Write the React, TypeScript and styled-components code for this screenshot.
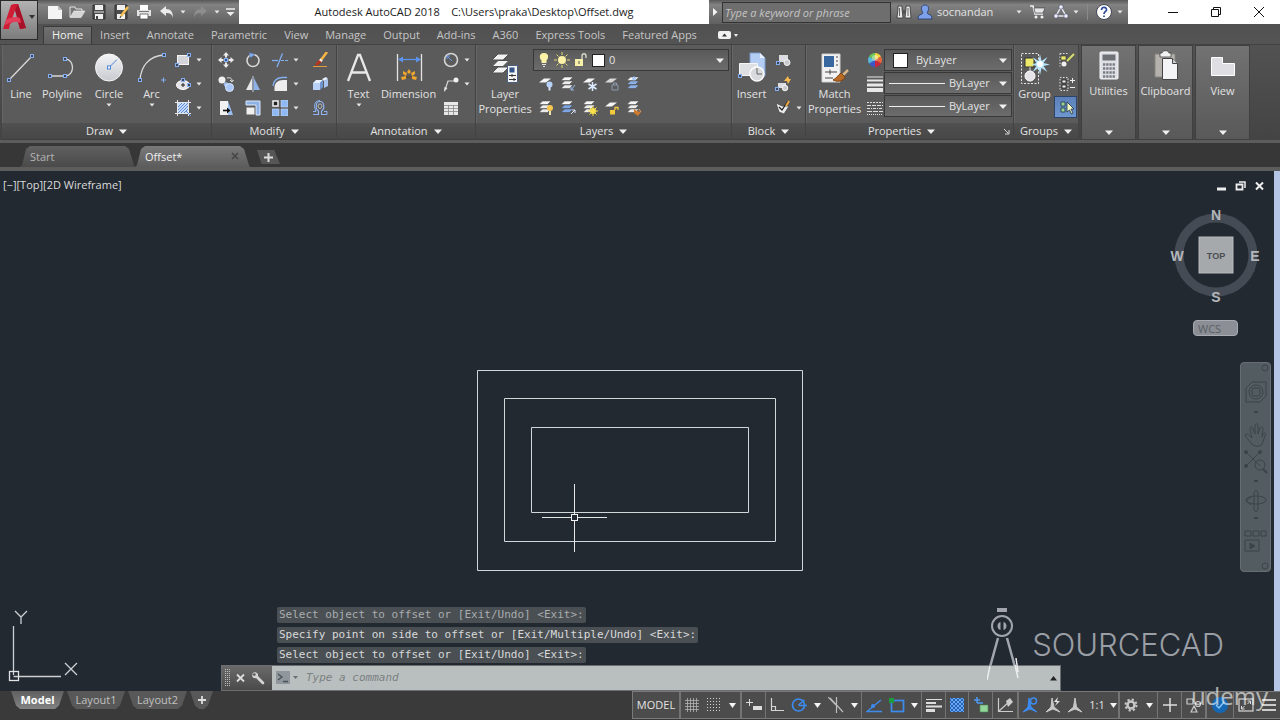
import React from 'react';
import styled, { createGlobalStyle, css } from 'styled-components';

const ui = '"Open Sans", "Noto Sans", sans-serif';
const mono = '"DejaVu Sans Mono", "Liberation Mono", monospace';

const Global = createGlobalStyle`
  * { box-sizing: border-box; }
  body { margin: 0; background: #383838; color: #e2e2e2; font: 11px/16px ${ui}; }
  button, input, select { font: inherit; color: inherit; }
  button { border: 0; padding: 0; background: none; cursor: pointer; }
  svg { display: block; flex: none; }
`;

const Page = styled.div`
  min-height: 100vh;
  display: flex;
  flex-direction: column;
`;

/* ---------- icons ---------- */

type IconProps = { w?: number; h?: number; box?: string; children?: React.ReactNode };
const Icon = ({ w = 16, h = 16, box, children }: IconProps) => (
  <svg width={w} height={h} viewBox={box || `0 0 ${w} ${h}`} fill="none" aria-hidden="true">
    {children}
  </svg>
);

const Caret = ({ big }: { big?: boolean }) =>
  big ? (
    <Icon w={8} h={5}><path d="M0 0.5h8L4 5z" fill="#f0f0f0" /></Icon>
  ) : (
    <Icon w={6} h={4}><path d="M0.5 0.5h5L3 3.5z" fill="#e8e8e8" /></Icon>
  );

const Grip = ({ x, y }: { x: number; y: number }) => (
  <rect x={x - 1.5} y={y - 1.5} width="3" height="3" fill="#3d4654" stroke="#85aef2" />
);

const LineIcon = () => (
  <Icon w={30} h={32}><path d="M3 28L26 4" stroke="#d8d8d8" strokeWidth="1.3" /><Grip x={3} y={28} /><Grip x={26} y={4} /></Icon>
);
const PolylineIcon = () => (
  <Icon w={30} h={32}><path d="M3 24h15c10 0 10-17 0-17" stroke="#d8d8d8" strokeWidth="1.3" /><Grip x={3} y={24} /><Grip x={18} y={24} /><Grip x={18} y={7} /></Icon>
);
const CircleIcon = () => (
  <Icon w={30} h={32}>
    <defs><linearGradient id="disc" x1="0" y1="0" x2="0" y2="1"><stop stopColor="#f4f4f6" /><stop offset="1" stopColor="#c8cad0" /></linearGradient></defs>
    <circle cx="15" cy="15.500" r="13.500" fill="url(#disc)" stroke="#f6f6f6" /><path d="M15 15.500l8-8" stroke="#4b83d8" /><rect x="13.500" y="14" width="3" height="3" fill="#fff" stroke="#4b83d8" />
  </Icon>
);
const ArcIcon = () => (
  <Icon w={30} h={32}><path d="M3 28C4 14 12 4 27 3" stroke="#d8d8d8" strokeWidth="1.3" /><Grip x={3} y={28} /><Grip x={27} y={3} /><path d="M24 28h5M26.500 25.500v5" stroke="#85aef2" /></Icon>
);
const RectIcon = () => (
  <Icon><rect x="2.500" y="3.500" width="11" height="9" fill="#d4d4d8" stroke="#f4f4f4" /><Grip x={2} y={13} /><Grip x={14} y={3} /></Icon>
);
const EllipseIcon = () => (
  <Icon><ellipse cx="8" cy="9" rx="6.500" ry="4.500" fill="#e4e4e8" stroke="#fff" /><path d="M6 9h4M8 7v4" stroke="#222" /><Grip x={8} y={4} /><Grip x={14} y={9} /></Icon>
);
const HatchIcon = () => (
  <Icon><rect x="3" y="3" width="10" height="10" fill="#c9dcfa" /><path d="M3 7l4-4M3 10l7-7M3 13L13 3M6 13l7-7M9 13l4-4" stroke="#3f76c9" strokeWidth=".8" /><path d="M0 2.500h16M0 13.500h16M2.500 0v16M13.500 0v16" stroke="#e6e6e6" /><path d="M11 11l5 5" stroke="#5b93ec" /></Icon>
);
const MoveIcon = () => (
  <Icon><path d="M8 0l3 3.500H9v2H7v-2H5zM8 16l3-3.500H9v-2H7v2H5zM0 8l3.500-3v2h2v2h-2v2zM16 8l-3.500-3v2h-2v2h2v2z" fill="#ececec" /><rect x="6.500" y="6.500" width="3" height="3" stroke="#85aef2" fill="#35598c" /></Icon>
);
const RotateIcon = () => (
  <Icon><circle cx="8" cy="8.500" r="6" stroke="#d8d8d8" strokeWidth="1.600" /><path d="M4 0.500l5.500 2L5.500 6z" fill="#85aef2" stroke="#4a6fae" strokeWidth=".5" /></Icon>
);
const TrimIcon = () => (
  <Icon><path d="M0 8.500h6" stroke="#85aef2" strokeWidth="1.300" /><path d="M9 8.500h7" stroke="#85aef2" strokeDasharray="3 1" /><path d="M10.500 1.500L5 15" stroke="#85aef2" strokeWidth="1.300" /></Icon>
);
const EraseIcon = () => (
  <Icon><path d="M15 0L9 8" stroke="#f3b646" strokeWidth="2.600" /><path d="M9.500 7.500l-2 2.500" stroke="#f4f4f4" strokeWidth="3" /><path d="M7 8l2.500 2c-2 3-5 4-7 3 2-1 2.500-4 4.500-5z" fill="#b3361a" /><path d="M1 14.500h14" stroke="#e89a38" /></Icon>
);
const CopyIcon = () => (
  <Icon><circle cx="4" cy="4" r="3.500" fill="#f0f0f0" /><path d="M9 2c4-1 5 1 5 3M12 4l2 2 1.500-2" stroke="#e4e4e4" /><circle cx="8" cy="8.500" r="2.200" fill="#9fc0f4" /><circle cx="11.500" cy="11.500" r="4" fill="#a9c7f6" stroke="#dbe8ff" /></Icon>
);
const MirrorIcon = () => (
  <Icon><path d="M7 2v12H1z" fill="#e8e8e8" /><path d="M9 2v12h6z" fill="#8fb2e6" /><path d="M8 0v16" stroke="#c0d4f4" /></Icon>
);
const FilletIcon = () => (
  <Icon><path d="M2.500 15V11.500C2.500 7 6 4 11 4h4v11z" fill="#ededf0" /><path d="M1 10C1.500 5 4.500 2 10 1.500h5" stroke="#85aef2" strokeWidth="1.400" /></Icon>
);
const ExplodeIcon = () => (
  <Icon><path d="M1 7h7v7H1z" fill="#b9d1f6" /><path d="M1 7l3-3h7L8 7z" fill="#e8f0ff" /><path d="M8 7l3-3v7l-3 3z" fill="#6f95d0" /><path d="M10 3l4-2 2 2-4 2z" fill="#e8f0ff" /><path d="M12 5l4-2v7l-4 2z" fill="#a9c4ee" /></Icon>
);
const StretchIcon = () => (
  <Icon><path d="M2 1h8v14H2z" fill="#f2f2f2" /><path d="M10 1l5 14h-5z" fill="#9cbff2" /><path d="M5 10.500h6" stroke="#111" strokeWidth="1.600" /><path d="M9 7.500l3.500 3L9 13.500z" fill="#111" /></Icon>
);
const ScaleIcon = () => (
  <Icon><path d="M1 1h14v14h-4V5H1z" fill="#8fb2e6" stroke="#dce8fb" /><rect x="1.500" y="7.500" width="8" height="7" fill="#f0f0f0" /></Icon>
);
const ArrayIcon = () => (
  <Icon><rect x="1" y="1" width="5" height="5" fill="#222" stroke="#f4f4f4" strokeWidth="1.500" /><path d="M9 0h7v7H9zM0 9h7v7H0zM9 9h7v7H9z" fill="#8fb8f4" stroke="#c9defc" strokeWidth=".6" /></Icon>
);
const OffsetIcon = () => (
  <Icon>
    <path d="M1 14.500h5.500v-3.500C3 9 3.500 1.500 8 1.500S13 9 9.500 11v3.500H15" stroke="#8fb2f0" strokeWidth="1.200" />
    <path d="M1 11.500h3C0.500 4 4 0.500 8 0.500M12 11.500h3v3" stroke="#8fb2f0" />
    <path d="M8 4c-2.500 0-2.500 4 0 4.500 2.500-.5 2.500-4.500 0-4.500" stroke="#e4e4e4" strokeWidth=".8" />
  </Icon>
);
const TextIcon = () => (
  <Icon w={30} h={32}><path d="M4 29L14 3h2l10 26M8 20.500h14" stroke="#e8e8e8" strokeWidth="2.300" /></Icon>
);
const DimensionIcon = () => (
  <Icon w={30} h={32}>
    <path d="M3.500 2v27M27.500 2v27" stroke="#e4e4e4" strokeWidth="1.300" /><path d="M5 7.500h21" stroke="#5b93ec" strokeWidth="1.300" /><path d="M4 7.500l5-3v6zM27 7.500l-5-3v6z" fill="#5b93ec" />
    <path d="M15 17l2 3-2 2-2-2zM9 19l4 2-1 3-3-2zM21 19l-4 2 1 3 3-2zM7 25l5-1v3l-4 1zM23 25l-5-1v3l4 1z" fill="#f0a52c" /><path d="M12 25h6" stroke="#6d4510" />
  </Icon>
);
const CenterMarkIcon = () => (
  <Icon><circle cx="8" cy="8" r="6.500" stroke="#d4d4d4" strokeWidth="1.600" /><path d="M4 4l5 5M4 4v3M4 4h3" stroke="#6b98e4" /></Icon>
);
const LeaderIcon = () => (
  <Icon><path d="M2 14l3-9h6" stroke="#d8d8d8" strokeWidth="1.200" /><path d="M1 16l.5-5 3 1z" fill="#e4e4e4" /><circle cx="13" cy="4" r="2.500" fill="#f0f0f0" /></Icon>
);
const TableIcon = () => (
  <Icon><path d="M1 2h14v13H1z" fill="#e8e8e8" /><path d="M1 5.500h14M1 8.500h14M1 11.500h14M5.500 5v10M10.500 5v10" stroke="#888" strokeWidth=".8" /></Icon>
);

const Sheets = ({ c = '#ececec' }: { c?: string }) => (
  <>
    <path d="M1 12.500l3.500-3.500H13l-3.500 3.500z" fill={c} stroke="#444" strokeWidth=".5" />
    <path d="M1 8.500l3.500-3.500H13L9.500 8.500z" fill={c} stroke="#444" strokeWidth=".5" />
    <path d="M1 4.500l3.500-3.500H13l-3.500 3.500z" fill="#f6f6f6" stroke="#444" strokeWidth=".5" />
  </>
);
const LayerPropsIcon = () => (
  <Icon w={30} h={32}>
    <path d="M2 21l6-6h11l-6 6zM2 14.500l6-6h11l-6 6zM2 8l6-6h11l-6 6z" fill="#f2f2f2" stroke="#505050" />
    <path d="M17.500 13.500h10v17h-10z" fill="#f4f4f4" stroke="#4d5f80" /><rect x="19.500" y="15.500" width="5" height="5" fill="#33558c" /><path d="M19 23.500h7M19 27.500h7M22 22v3M24 26v3" stroke="#333" />
  </Icon>
);
const MatchIcon = () => (
  <Icon w={30} h={32}>
    <path d="M2 2h18v28H2z" fill="#f2f2f2" stroke="#d0d0d0" /><rect x="4" y="4" width="10" height="11" fill="#38669f" /><path d="M16 5h2M16 9h2M16 13h2M5 20h12M5 26h8M10 17.500v5" stroke="#444" />
    <path d="M28 18l-6 6" stroke="#d9b58a" strokeWidth="2.500" /><path d="M21 21l4 4c-2 5-8 5-12 3 4-2 5-5 8-7z" fill="#b96a24" stroke="#7c4210" />
  </Icon>
);
const InsertIcon = () => (
  <Icon w={30} h={32}>
    <path d="M13 1h10l5 5v18H13z" fill="#b4cdf5" stroke="#7c9bcc" /><path d="M23 1v5h5z" fill="#e8f0ff" /><path d="M2.500 11.500h18v12h-18z" fill="#dedfe3" stroke="#f6f6f6" /><Grip x={3} y={24} />
    <circle cx="20" cy="22" r="7" fill="#d8dade" stroke="#fff" strokeWidth="1.300" /><path d="M20 22v-6M20 22h5" stroke="#666" />
  </Icon>
);

const layerMarks: React.ReactNode[] = [
  <><path d="M1 6.500l5-4h7l-5 4z" fill="#f4f4f4" /><circle cx="11.500" cy="8.500" r="3" fill="#b8d3fb" /><path d="M11.500 11v3.500" stroke="#d8e4fa" strokeWidth="2" /></>,
  <><Sheets /><path d="M15 9l-4 5M11 11v3h3" stroke="#9bb9e8" /></>,
  <><path d="M1 6.500l5-4h7l-5 4z" fill="#f4f4f4" /><path d="M10.500 6v9M6.500 8l8 5M14.500 8l-8 5" stroke="#dceaff" strokeWidth="1.500" /></>,
  <><path d="M1 6.500l5-4h7l-5 4z" fill="#d8d8d8" /><path d="M8 9h6v5H8zM9.500 9V7h3v2" stroke="#8c9aae" /></>,
  <><Sheets c="#8db2ea" /><circle cx="8" cy="2.500" r="2" fill="#a9c7f6" /></>,
  <><Sheets /><circle cx="12" cy="8" r="3" fill="#f6c64f" /><path d="M12 11v4" stroke="#f2e4b0" strokeWidth="2" /></>,
  <><Sheets c="#7ea6e6" /><path d="M11 14l4-4M12 10h3v3" stroke="#d8e4fa" /></>,
  <><Sheets /><circle cx="11" cy="11" r="3" fill="#f8e04a" /><path d="M11 6v10M6 11h10M7.500 7.500l7 7M14.500 7.500l-7 7" stroke="#f8e04a" /></>,
  <><path d="M1 6.500l5-4h7l-5 4z" fill="#f4f4f4" /><path d="M6 10h5v4.500H6z" fill="#f2ca3c" /><path d="M11 10V7.500h3V10" stroke="#f2ca3c" strokeWidth="1.300" /></>,
  <><Sheets /><path d="M8 9l3 2 4 1-3 4-4-3z" fill="#cc7a2e" /><path d="M13 9l2 3" stroke="#e2a466" /></>,
];

const BulbIcon = () => (
  <Icon w={12} h={16}><path d="M6 1c5 0 5 5 2.500 7.500V11h-5V8.500C1 6 1 1 6 1z" fill="#fbf2a8" /><path d="M4 12.500h4M5 14.500h2" stroke="#ddd" /></Icon>
);
const SunIcon = () => (
  <Icon><circle cx="8" cy="8" r="4" fill="#fbf2a8" /><path d="M8 0v3M8 13v3M0 8h3M13 8h3M2.500 2.500l2 2M11.500 11.500l2 2M13.500 2.500l-2 2M4.500 11.500l-2 2" stroke="#e9d977" /></Icon>
);
const UnlockIcon = () => (
  <Icon w={14}><path d="M1 7h8v7H1z" fill="#f7f0a8" /><path d="M8 7V4c0-3 4-3 4 0v2" stroke="#d4d4c4" strokeWidth="1.400" /><path d="M5 9v3" stroke="#555" /></Icon>
);

const blockMarks: React.ReactNode[] = [
  <><path d="M4 3h9v7H4z" fill="#dcdde2" /><circle cx="12" cy="10.500" r="3" fill="#c9cbd1" stroke="#f4f4f4" /><Grip x={3} y={11} /></>,
  <><path d="M3 7h8v5H3z" fill="#dcdde2" /><circle cx="10" cy="12" r="2.800" fill="#c9cbd1" stroke="#f4f4f4" /><path d="M13 0l1 3 2 0-3 5-1-3-3 0z" fill="#f6bb4c" /><Grip x={2} y={13} /></>,
  <><path d="M1 3l6 3 7 0-5 8-5-2z" fill="#ececec" stroke="#444" strokeWidth=".7" /><path d="M4 7l3 3 6-9" stroke="#222" strokeWidth="1.300" /><path d="M14 1l-3 5" stroke="#f0a640" strokeWidth="2" /></>,
];
const ColorWheel = () => (
  <Icon>
    <path d="M8 8V1a7 7 0 0 1 6 3.500z" fill="#f4d53b" /><path d="M8 8l6-3.500a7 7 0 0 1 0 7z" fill="#e8663a" /><path d="M8 8l6 3.500A7 7 0 0 1 8 15z" fill="#c8263c" /><path d="M8 8v7a7 7 0 0 1-6-3.500z" fill="#3a59c8" /><path d="M8 8l-6 3.500a7 7 0 0 1 0-7z" fill="#56b8dc" /><path d="M8 8L2 4.500A7 7 0 0 1 8 1z" fill="#6bc458" /><circle cx="8" cy="6" r="3" fill="#fff" opacity=".4" />
  </Icon>
);
const WeightIcon = () => (
  <Icon><path d="M0 1h16" stroke="#e8e8e8" /><path d="M0 4.500h16" stroke="#e8e8e8" strokeWidth="2" /><path d="M0 9h16" stroke="#e8e8e8" strokeWidth="3" /><path d="M0 14h16" stroke="#e8e8e8" strokeWidth="4" /></Icon>
);
const LinetypeIcon = () => (
  <Icon><path d="M0 2.500h16" stroke="#ddd" strokeDasharray="2 1" /><path d="M0 5.500h16" stroke="#ddd" strokeDasharray="4 1" /><path d="M0 8.500h16" stroke="#ddd" strokeDasharray="3 1 1 1" /><path d="M0 11.500h16" stroke="#ddd" strokeDasharray="5 1" /><path d="M0 14.500h16" stroke="#ddd" strokeDasharray="1 1" /></Icon>
);
const GroupIcon = () => (
  <Icon w={30} h={32}>
    <path d="M1.500 1.500h17v30h-17z" stroke="#e8e8e8" strokeDasharray="2 1.500" /><rect x="5" y="6" width="9" height="9" fill="#ece96b" stroke="#333" /><circle cx="10" cy="24" r="5" fill="#e4e4e8" stroke="#fff" /><path d="M10 15v4" stroke="#ddd" />
    <path d="M20 2l1.500 7 6-4-4 6 7 1.500-7 1.500 4 6-6-4-1.500 7-1.500-7-6 4 4-6-5-1.500 5-1.500-4-6 6 4z" fill="#b8e4fa" /><circle cx="20" cy="12" r="3" fill="#fff" />
  </Icon>
);
const groupMarks: React.ReactNode[] = [
  <><path d="M1 1.500h9M1 1.500v13" stroke="#ddd" strokeDasharray="1.500 1.500" /><rect x="2" y="4" width="5" height="4" fill="#ece96b" stroke="#333" strokeWidth=".6" /><circle cx="5" cy="12" r="2.500" fill="#f0f0f0" /><path d="M15 2L8 9" stroke="#d7df6a" strokeWidth="2" /></>,
  <><path d="M1 1.500h8v13H1z" stroke="#ddd" strokeDasharray="1.500 1.500" /><path d="M3 4h4v3H3zM3 9h4v3H3z" fill="#eee" stroke="#222" strokeWidth=".8" /><path d="M11 4.500h5M13.500 2v5M11 11.500h5" stroke="#eee" /></>,
  <><path d="M2 3h4v4H2zM2 9h4v4H2z" fill="#9ad29a" stroke="#234" strokeWidth=".8" /><path d="M8 3v10l2.500-2 2 4 1.500-1-2-4h3z" fill="#f4f7c0" stroke="#234" strokeWidth=".8" /></>,
];
const CalcIcon = () => (
  <Icon w={30} h={32}>
    <rect x="6" y="2" width="18" height="27" rx="1" fill="#dfe0e6" stroke="#f4f4f6" /><rect x="8.500" y="4.500" width="13" height="6" fill="#6e7076" />
    <path d="M9 14.500h12M9 18.500h12M9 22.500h12M9 26.500h12" stroke="#7a7c84" strokeWidth="2.600" strokeDasharray="2.300 .9" />
  </Icon>
);
const ClipboardIcon = () => (
  <Icon w={30} h={32}>
    <path d="M4 4h20v23H4z" fill="#b5b2ae" stroke="#87847f" /><path d="M9 3h2c0-3 7-3 7 0h2v4H9z" fill="#f2f2f2" stroke="#444" strokeWidth=".8" /><path d="M11.500 8.500h10l5 5v16h-15z" fill="#f4f4f6" stroke="#444" /><path d="M21.500 8.500v5h5" fill="#cfd0d6" stroke="#444" />
  </Icon>
);
const ViewIcon = () => (
  <Icon w={30} h={32}><path d="M3.500 7.500h11v6h12v12h-23z" fill="#dfdfe3" stroke="#fff" /></Icon>
);

/* ---------- title bar ---------- */

const Header = styled.header`
  display: flex;
  background: linear-gradient(#4d4d4d, #545454);
`;
const HeaderMain = styled.div`
  flex: 1;
  min-width: 0;
`;
const AppButton = styled.button`
  width: 38px;
  height: 40px;
  border: 1px solid #2a2a2a;
  background: linear-gradient(#b2b2b2, #7c7c7c);
  display: flex;
  align-items: center;
  justify-content: center;
  gap: 3px;
  padding-bottom: 6px;
`;
const TitleBar = styled.div`
  display: flex;
  height: 24px;
  background: #fff;
`;
const barFill = css`
  background: linear-gradient(#585858, #828282 20%, #606060);
`;
const Quick = styled.div`
  ${barFill}
  display: flex;
  align-items: center;
  width: 201px;
  padding-left: 6px;
`;
const ToolButton = styled.button<{ $w?: number }>`
  width: ${(p) => p.$w ?? 22}px;
  align-self: stretch;
  display: flex;
  align-items: center;
  justify-content: center;
`;
const WindowTitle = styled.h1`
  flex: 1;
  margin: 0;
  color: #1c1c1c;
  font-size: 11px;
  font-weight: 400;
  line-height: 24px;
  white-space: pre;
  text-align: center;
`;
const SearchArea = styled.div`
  ${barFill}
  display: flex;
  align-items: center;
  width: 182px;
`;
const SearchInput = styled.input`
  flex: 1;
  min-width: 0;
  height: 21px;
  padding: 0 2px;
  border: 1px solid #333;
  background: #6e6e6e;
  font-style: italic;
  outline: none;
  &::placeholder { color: #c4c4c4; opacity: 1; }
`;
const InfoCenter = styled.div`
  ${barFill}
  display: flex;
  align-items: center;
  width: 237px;
`;
const UserButton = styled.button`
  display: flex;
  align-items: center;
  gap: 4px;
  width: 98px;
`;
const Rule = styled.span`
  width: 1px;
  height: 16px;
  background: #8a8a8a;
`;
const WindowButtons = styled.div`
  display: flex;
  justify-content: space-around;
  width: 152px;
  padding-left: 24px;
`;

/* ---------- ribbon ---------- */

const TabRow = styled.nav`
  display: flex;
  align-items: flex-end;
  height: 20px;
  padding-left: 6px;
`;
const RibbonTab = styled.button<{ $active?: boolean }>`
  height: 17px;
  padding: 0 9px 1px 8px;
  line-height: 14px;
  color: ${(p) => (p.$active ? '#f0f0f0' : '#c6c6c6')};
  ${(p) => p.$active && css`
    background: linear-gradient(#707070, #606060);
    box-shadow: 0 0 0 1px #3a3a3a;
    padding-right: 8px;
    margin-right: 1px;
  `}
`;
const Ribbon = styled.div`
  display: flex;
  height: 99px;
  padding-left: 2px;
  background: linear-gradient(#525252, #444);
  border-top: 1px solid #424242;
  border-bottom: 3px solid #5c5c5c;
`;
const Panel = styled.section<{ $w: number }>`
  width: ${(p) => p.$w}px;
  display: flex;
  flex-direction: column;
  background: #5b5b5b;
  border-right: 1px solid #434343;
  box-shadow: inset 1px 0 #666;
`;
const PanelBody = styled.div`
  flex: 1;
  display: flex;
  padding: 3px 0 0 1px;
`;
const PanelTitle = styled.button`
  height: 17px;
  display: flex;
  align-items: center;
  justify-content: center;
  gap: 6px;
  background: linear-gradient(#505050, #474747);
  border-bottom: 1px solid #3e3e3e;
`;
const TitleText = styled.span<{ $grow?: boolean }>`
  display: flex;
  align-items: center;
  justify-content: center;
  gap: 6px;
  ${(p) => p.$grow && 'flex: 1;'}
`;
const BigButton = styled.button<{ $w: number }>`
  width: ${(p) => p.$w}px;
  display: flex;
  flex-direction: column;
  align-items: center;
  padding-top: 4px;
  line-height: 15px;
  > svg + span { margin-top: 2px; }
  > span + svg { margin-top: 2px; }
`;
const SmallGrid = styled.div<{ $cols: string }>`
  display: grid;
  grid-template-columns: ${(p) => p.$cols};
  grid-auto-rows: 24px;
`;
const SmallButton = styled.button<{ $on?: boolean }>`
  display: flex;
  align-items: center;
  gap: 5px;
  padding-left: 5px;
  ${(p) => p.$on && css`
    background: linear-gradient(#5b7fb8, #7098d0);
    box-shadow: inset 0 0 0 1px #2c4468;
    margin-bottom: 2px;
  `}
`;
const LayerColumn = styled.div`
  flex: 1;
  display: flex;
  flex-direction: column;
  gap: 1px;
  padding: 1px 2px 0 0;
`;
const Picker = styled.label`
  display: flex;
  align-items: center;
  gap: 4px;
  height: 22px;
  padding: 0 4px;
  border: 1px solid #383838;
  background: linear-gradient(#5a5a5a, #6c6c6c);
`;
const Select = styled.select<{ $pad?: number }>`
  appearance: none;
  flex: 1;
  min-width: 0;
  border: 0;
  padding: 0 0 0 ${(p) => p.$pad ?? 0}px;
  background: none;
  color: #e2e2e2;
  outline: none;
  option { color: #222; }
`;
const Swatch = styled.span<{ $size: number }>`
  width: ${(p) => p.$size}px;
  height: ${(p) => p.$size}px;
  background: #fff;
  border: 1px solid #222;
`;
const Stroke = styled.span<{ $w: number }>`
  width: ${(p) => p.$w}px;
  height: 1px;
  background: #eee;
`;
const PickerStack = styled.div`
  flex: 1;
  display: flex;
  flex-direction: column;
  gap: 1px;
  padding: 1px 1px 0 0;
`;
const CollapsedPanel = styled.button`
  width: 55px;
  margin-left: 2px;
  display: flex;
  flex-direction: column;
  align-items: center;
  padding: 4px 0;
  background: linear-gradient(#727272, #595959);
  border: 1px solid #404040;
  > span { flex: 1; margin-top: 1px; }
`;

/* ---------- drawing tabs ---------- */

const FileTabs = styled.nav`
  display: flex;
  align-items: flex-end;
  height: 28px;
  padding-left: 20px;
  background: #373737;
  border-bottom: 4px solid #5c5c5c;
`;
const FileTab = styled.button<{ $active?: boolean }>`
  width: 115px;
  height: 21px;
  display: flex;
  align-items: center;
  justify-content: space-between;
  padding: 0 10px;
  text-align: left;
  color: ${(p) => (p.$active ? '#f0f0f0' : '#b4b4b4')};
  background: ${(p) => (p.$active ? 'linear-gradient(#7a7a7a, #5c5c5c)' : 'linear-gradient(#606060, #4a4a4a)')};
  clip-path: polygon(0 100%, 2px 92%, 6px 14%, 10px 0, calc(100% - 10px) 0, calc(100% - 6px) 14%, calc(100% - 1px) 92%, 100% 100%);
`;
const AddTab = styled.button`
  width: 23px;
  height: 14px;
  margin: 0 0 3px 7px;
  display: flex;
  align-items: center;
  justify-content: center;
  background: #565656;
  clip-path: polygon(0 0, 75% 0, 100% 100%, 20% 100%);
`;

/* ---------- canvas ---------- */

const Workspace = styled.main`
  flex: 1;
  min-height: 520px;
  position: relative;
  overflow: hidden;
  background: #222931;
  border-right: 6px solid #b5c5e6;
`;
const ViewLabel = styled.div`
  padding: 5px 3px;
  line-height: 18px;
  color: #dcdcdc;
`;
const Place = styled.div<{ $l?: number; $t?: number; $r?: number; $b?: number }>`
  position: absolute;
  ${(p) => p.$l !== undefined && `left: ${p.$l}px;`}
  ${(p) => p.$t !== undefined && `top: ${p.$t}px;`}
  ${(p) => p.$r !== undefined && `right: ${p.$r}px;`}
  ${(p) => p.$b !== undefined && `bottom: ${p.$b}px;`}
`;
const ViewControls = styled(Place)`
  display: flex;
  gap: 3px;
`;
const WcsButton = styled.button`
  width: 45px;
  height: 16px;
  padding-left: 4px;
  border: 1px solid #a8acb2;
  border-radius: 4px;
  background: #8b8e94;
  color: #5a5e66;
  text-align: left;
  line-height: 13px;
`;
const NavBar = styled(Place)`
  width: 31px;
  height: 210px;
  border-radius: 4px;
  background: #535c61;
  border: 1px solid #666e73;
`;
const History = styled(Place)`
  display: flex;
  flex-direction: column;
  align-items: flex-start;
  gap: 4px;
`;
const HistoryLine = styled.div<{ $dim?: boolean }>`
  height: 16px;
  padding: 0 2px;
  border-radius: 2px;
  background: #4a4f53;
  color: ${(p) => (p.$dim ? '#a9adb0' : '#d8dadb')};
  font: 11px/16px ${mono};
`;
const CommandBar = styled.div`
  position: absolute;
  left: 221px;
  right: 213px;
  bottom: 0;
  height: 26px;
  display: flex;
  align-items: center;
  padding: 0 3px 0 0;
  border: 1px solid #6b6e70;
  background: #b9bfbf;
`;
const CommandTools = styled.div`
  display: flex;
  align-items: center;
  gap: 6px;
  width: 50px;
  height: 100%;
  padding-left: 3px;
  background: linear-gradient(#6a6a6a, #4a4a4a);
`;
const CommandInput = styled.input`
  flex: 1;
  min-width: 0;
  border: 0;
  padding: 0 4px;
  background: none;
  color: #333;
  font: italic 11px/16px ${mono};
  outline: none;
  &::placeholder { color: #7b8082; opacity: 1; }
`;
const Wordmark = styled.div`
  color: #9a9ea5;
  font: 300 31px/32px Inter, sans-serif;
`;

/* ---------- bottom ---------- */

const Footer = styled.footer`
  position: relative;
  display: flex;
  justify-content: space-between;
  align-items: flex-start;
  height: 29px;
  background: #3a3a3a;
`;
const LayoutTabs = styled.nav`
  display: flex;
  padding-left: 11px;
`;
const LayoutTab = styled.button<{ $active?: boolean; $w: number }>`
  width: ${(p) => p.$w}px;
  height: 18px;
  margin-right: 3px;
  color: ${(p) => (p.$active ? '#fff' : '#c0c0c0')};
  font-weight: ${(p) => (p.$active ? 700 : 400)};
  background: ${(p) => (p.$active ? 'linear-gradient(#606060, #828282)' : '#585858')};
  clip-path: polygon(0 0, 100% 0, calc(100% - 5px) 80%, calc(100% - 9px) 100%, 9px 100%, 5px 80%);
  display: flex;
  align-items: center;
  justify-content: center;
`;
const StatusBar = styled.div`
  display: flex;
  height: 28px;
  border: 1px solid #7a7a7a;
  border-right: 0;
  background: #4c4c4c;
`;
const StatusGroup = styled.div<{ $wide?: boolean }>`
  display: flex;
  border-right: ${(p) => (p.$wide ? 2 : 1)}px solid #747474;
`;
const Watermark = styled.div`
  position: absolute;
  right: 12px;
  bottom: 8px;
  color: #fff;
  opacity: 0.6;
  font: 24px/32px ${ui};
  pointer-events: none;
`;

const tabs = ['Insert', 'Annotate', 'Parametric', 'View', 'Manage', 'Output', 'Add-ins', 'A360', 'Express Tools', 'Featured Apps'];

const Small = ({ icon, name, caret, on }: { icon: React.ReactNode; name: string; caret?: boolean; on?: boolean }) => (
  <SmallButton aria-label={name} $on={on}>{icon}{caret && <Caret />}</SmallButton>
);
const Title = ({ children }: { children: string }) => (
  <PanelTitle>{children}<Caret big /></PanelTitle>
);
const Big = ({ icon, w, lines, caret }: { icon: React.ReactNode; w: number; lines: string[]; caret?: boolean }) => (
  <BigButton $w={w}>{icon}{lines.map((l) => <span key={l}>{l}</span>)}{caret && <Caret />}</BigButton>
);
const Status = ({ name, w = 22, children }: { name: string; w?: number; children: React.ReactNode }) => (
  <ToolButton $w={w} aria-label={name}>{children}</ToolButton>
);
const Drop = ({ w = 15, name }: { w?: number; name: string }) => (
  <ToolButton $w={w} aria-label={name}><Icon w={7} h={5}><path d="M0 0h7L3.500 5z" fill="#f4f4f4" /></Icon></ToolButton>
);

const TitleRow = () => (
  <TitleBar>
    <Quick>
      <ToolButton aria-label="New"><Icon><path d="M1 2h10l4 4v9H1z" fill="#f4f4f4" /><path d="M11 2v4h4z" fill="#bbb" /></Icon></ToolButton>
      <ToolButton aria-label="Open"><Icon><path d="M1 13V3h5l1 2h6v2" stroke="#e4e4e4" fill="#777" /><path d="M1 13.500L5 7h11l-4 6.500z" fill="#d4d4d4" stroke="#f0f0f0" strokeWidth=".6" /></Icon></ToolButton>
      <ToolButton aria-label="Save"><Icon><path d="M2 1h12v14H2z" fill="#4c4c4c" stroke="#333" /><path d="M4 1h8v5H4zM4 10h8v5H4z" fill="#f0f0f0" /><path d="M3 8h10" stroke="#999" strokeWidth="2" /><path d="M6 12v3" stroke="#444" strokeWidth="2" /></Icon></ToolButton>
      <ToolButton aria-label="Save As"><Icon><path d="M2 1h12v14H2z" fill="#4c4c4c" stroke="#333" /><path d="M4 1h8v5H4zM4 10h8v5H4z" fill="#f0f0f0" /><path d="M15 3L8 12" stroke="#f3bf55" strokeWidth="2.600" /><path d="M8 12l-1 2" stroke="#333" /></Icon></ToolButton>
      <ToolButton $w={23} aria-label="Plot"><Icon><path d="M4 1h8v5H4z" fill="#fff" /><path d="M1 6h14v6H1z" fill="#e4e4e4" /><path d="M4 10h8v5H4z" fill="#fff" stroke="#555" strokeWidth=".8" /><path d="M3 7.500h10" stroke="#777" /></Icon></ToolButton>
      <ToolButton $w={24} aria-label="Undo"><Icon><path d="M1 7l6-5v3c5 0 7 3 7 9-1-4-3-5-7-5v3z" fill="#eaeaea" /></Icon></ToolButton>
      <ToolButton $w={8} aria-label="Undo list"><Caret /></ToolButton>
      <ToolButton $w={26} aria-label="Redo"><Icon><path d="M15 7L9 2v3c-5 0-7 3-7 9 1-4 3-5 7-5v3z" fill="#8d8d8d" /></Icon></ToolButton>
      <ToolButton $w={8} aria-label="Redo list"><Caret /></ToolButton>
      <ToolButton $w={18} aria-label="Customize toolbar"><Icon w={9} h={9}><path d="M0 1h9" stroke="#eee" strokeWidth="1.500" /><path d="M.5 4h8l-4 4z" fill="#eee" /></Icon></ToolButton>
    </Quick>
    <WindowTitle>{'Autodesk AutoCAD 2018    C:\\Users\\praka\\Desktop\\Offset.dwg'}</WindowTitle>
    <SearchArea>
      <ToolButton $w={13} aria-label="Collapse search"><Icon w={5} h={8}><path d="M0 0l4.500 4L0 8z" fill="#f4f4f4" /></Icon></ToolButton>
      <SearchInput aria-label="Search" placeholder="Type a keyword or phrase" />
    </SearchArea>
    <InfoCenter>
      <ToolButton $w={26} aria-label="Find"><Icon><path d="M2 2h4v3l1 9H1l1-9zM10 2h4l1 12H9l1-9z" fill="#e8e8e8" stroke="#333" strokeWidth=".8" /><path d="M6 6h4v4H6z" fill="#555" /><path d="M3.500 4v8M12 4v8" stroke="#666" /></Icon></ToolButton>
      <UserButton><Icon><path d="M8 1c4 0 4 4 3 6s-1 2 0 3c3 1 4 2 4 5H1c0-3 1-4 4-5 1-1 1-1 0-3S4 1 8 1z" fill="#7da0ea" stroke="#26386b" strokeWidth=".8" /></Icon>socnandan</UserButton>
      <ToolButton $w={8} aria-label="Account menu"><Caret /></ToolButton>
      <ToolButton $w={28} aria-label="Exchange"><Icon><path d="M1 2h3l2 8h8" stroke="#f0f0f0" strokeWidth="1.500" /><path d="M5 4h11l-2 5H6z" fill="#e4e4e4" stroke="#334" strokeWidth=".6" /><circle cx="7" cy="13" r="1.500" fill="#f0f0f0" /><circle cx="13" cy="13" r="1.500" fill="#f0f0f0" /></Icon></ToolButton>
      <ToolButton $w={20} aria-label="Stay connected"><Icon><path d="M8 3L3 12h10z" stroke="#e4e8f4" strokeWidth="1.500" /><circle cx="8" cy="3" r="2.200" fill="#eef" stroke="#446" strokeWidth=".6" /><circle cx="3" cy="12" r="2.200" fill="#eef" stroke="#446" strokeWidth=".6" /><circle cx="13" cy="12" r="2.200" fill="#eef" stroke="#446" strokeWidth=".6" /></Icon></ToolButton>
      <ToolButton $w={10} aria-label="Connect menu"><Caret /></ToolButton>
      <ToolButton $w={12} as="span"><Rule /></ToolButton>
      <ToolButton $w={22} aria-label="Help"><Icon><circle cx="8" cy="8" r="7.500" fill="#fff" stroke="#445" /><path d="M5.500 6c0-4 5.500-3 5 0-.3 1.500-2.500 1.500-2.500 4M8 11.500v1.500" stroke="#2c4a9a" strokeWidth="1.700" /></Icon></ToolButton>
      <ToolButton $w={10} aria-label="Help menu"><Caret /></ToolButton>
    </InfoCenter>
    <WindowButtons>
      <ToolButton aria-label="Minimize"><Icon w={10} h={10}><path d="M0 5.500h10" stroke="#111" /></Icon></ToolButton>
      <ToolButton aria-label="Restore"><Icon w={10} h={10}><path d="M.5 2.500h7v7h-7zM2.500 2V.5h7v7H8" stroke="#111" /></Icon></ToolButton>
      <ToolButton aria-label="Close"><Icon w={10} h={10}><path d="M0 0l10 10M10 0L0 10" stroke="#111" /></Icon></ToolButton>
    </WindowButtons>
  </TitleBar>
);

export default function App() {
  return (
    <Page>
      <Global />
      <Header>
        <AppButton aria-label="Application menu">
          <Icon w={23} h={28}>
            <path d="M0 26L8 2l3-1h4l8 24-6 1-2-7c-3-1-6 0-8 2l-1 5z" fill="#d01c34" />
            <path d="M9.500 15L12 7l2.500 7.500c-2 0-3.500.5-5 .5z" fill="#a4a4a4" />
            <path d="M12 7l3-6 8 24-6 1z" fill="#a81228" /><path d="M3 17c5-3 10-4 14-2l1 5c-5-2-11-1-16 2z" fill="#e2405a" />
          </Icon>
          <Icon w={6} h={4}><path d="M0 0h6L3 4z" fill="#333" /></Icon>
        </AppButton>
        <HeaderMain>
          <TitleRow />
          <TabRow>
            <RibbonTab $active>Home</RibbonTab>
            {tabs.map((t) => <RibbonTab key={t}>{t}</RibbonTab>)}
            <RibbonTab aria-label="Minimize ribbon"><Icon w={24} h={16}><rect x="4" y="4" width="13" height="8" rx="2" fill="#f0f0f0" /><path d="M8 9.500h5L10.500 6.500z" fill="#333" /><path d="M20 7h4l-2 3z" fill="#eee" /></Icon></RibbonTab>
          </TabRow>
        </HeaderMain>
      </Header>

      <Ribbon>
        <Panel $w={210}>
          <PanelBody>
            <Big icon={<LineIcon />} w={36} lines={['Line']} />
            <Big icon={<PolylineIcon />} w={46} lines={['Polyline']} />
            <Big icon={<CircleIcon />} w={48} lines={['Circle']} caret />
            <Big icon={<ArcIcon />} w={37} lines={['Arc']} caret />
            <SmallGrid $cols="34px">
              <Small icon={<RectIcon />} name="Rectangle" caret />
              <Small icon={<EllipseIcon />} name="Ellipse" caret />
              <Small icon={<HatchIcon />} name="Hatch" caret />
            </SmallGrid>
          </PanelBody>
          <Title>Draw</Title>
        </Panel>
        <Panel $w={125}>
          <PanelBody>
            <SmallGrid $cols="27px 27px 40px 26px">
              <Small icon={<MoveIcon />} name="Move" />
              <Small icon={<RotateIcon />} name="Rotate" />
              <Small icon={<TrimIcon />} name="Trim" caret />
              <Small icon={<EraseIcon />} name="Erase" />
              <Small icon={<CopyIcon />} name="Copy" />
              <Small icon={<MirrorIcon />} name="Mirror" />
              <Small icon={<FilletIcon />} name="Fillet" caret />
              <Small icon={<ExplodeIcon />} name="Explode" />
              <Small icon={<StretchIcon />} name="Stretch" />
              <Small icon={<ScaleIcon />} name="Scale" />
              <Small icon={<ArrayIcon />} name="Array" caret />
              <Small icon={<OffsetIcon />} name="Offset" />
            </SmallGrid>
          </PanelBody>
          <Title>Modify</Title>
        </Panel>
        <Panel $w={139}>
          <PanelBody>
            <Big icon={<TextIcon />} w={41} lines={['Text']} caret />
            <Big icon={<DimensionIcon />} w={59} lines={['Dimension']} />
            <SmallGrid $cols="34px">
              <Small icon={<CenterMarkIcon />} name="Center mark" caret />
              <Small icon={<LeaderIcon />} name="Leader" caret />
              <Small icon={<TableIcon />} name="Table" />
            </SmallGrid>
          </PanelBody>
          <Title>Annotation</Title>
        </Panel>
        <Panel $w={256}>
          <PanelBody>
            <Big icon={<LayerPropsIcon />} w={56} lines={['Layer', 'Properties']} />
            <LayerColumn>
              <Picker>
                <BulbIcon /><SunIcon /><UnlockIcon /><Swatch $size={13} />
                <Select aria-label="Current layer"><option>0</option></Select>
                <Caret big />
              </Picker>
              <SmallGrid $cols="repeat(5, 22px)">
                {layerMarks.map((m, i) => <Small key={i} icon={<Icon>{m}</Icon>} name={`Layer tool ${i + 1}`} />)}
              </SmallGrid>
            </LayerColumn>
          </PanelBody>
          <Title>Layers</Title>
        </Panel>
        <Panel $w={74}>
          <PanelBody>
            <Big icon={<InsertIcon />} w={37} lines={['Insert']} />
            <SmallGrid $cols="34px">
              {blockMarks.map((m, i) => <Small key={i} icon={<Icon>{m}</Icon>} name={['Create block', 'Edit block', 'Edit attributes'][i]} caret={i === 2} />)}
            </SmallGrid>
          </PanelBody>
          <Title>Block</Title>
        </Panel>
        <Panel $w={208}>
          <PanelBody>
            <Big icon={<MatchIcon />} w={55} lines={['Match', 'Properties']} />
            <SmallGrid $cols="22px">
              <Small icon={<ColorWheel />} name="Object color" />
              <Small icon={<WeightIcon />} name="Lineweight" />
              <Small icon={<LinetypeIcon />} name="Linetype" />
            </SmallGrid>
            <PickerStack>
              <Picker><Stroke $w={0} /><Swatch $size={15} /><Select aria-label="Color" $pad={4}><option>ByLayer</option></Select><Caret big /></Picker>
              <Picker><Stroke $w={56} /><Select aria-label="Lineweight"><option>ByLayer</option></Select><Caret big /></Picker>
              <Picker><Stroke $w={56} /><Select aria-label="Linetype"><option>ByLayer</option></Select><Caret big /></Picker>
            </PickerStack>
          </PanelBody>
          <PanelTitle>
            <TitleText $grow>Properties<Caret big /></TitleText>
            <Icon w={10} h={8}><path d="M1 2l4 4M6 3v4H2" stroke="#ddd" /></Icon>
          </PanelTitle>
        </Panel>
        <Panel $w={65}>
          <PanelBody>
            <Big icon={<GroupIcon />} w={39} lines={['Group']} />
            <SmallGrid $cols="23px">
              {groupMarks.map((m, i) => <Small key={i} icon={<Icon>{m}</Icon>} name={['Ungroup', 'Group edit', 'Group selection'][i]} on={i === 2} />)}
            </SmallGrid>
          </PanelBody>
          <Title>Groups</Title>
        </Panel>
        <CollapsedPanel><CalcIcon /><span>Utilities</span><Caret big /></CollapsedPanel>
        <CollapsedPanel><ClipboardIcon /><span>Clipboard</span><Caret big /></CollapsedPanel>
        <CollapsedPanel><ViewIcon /><span>View</span><Caret big /></CollapsedPanel>
      </Ribbon>

      <FileTabs>
        <FileTab>Start</FileTab>
        <FileTab $active>Offset*<Icon w={9} h={9}><path d="M1 1l6 6M7 1L1 7" stroke="#444" strokeWidth="1.500" /></Icon></FileTab>
        <AddTab aria-label="New drawing"><Icon w={9} h={9}><path d="M0 4.500h9M4.500 0v9" stroke="#ddd" strokeWidth="2" /></Icon></AddTab>
      </FileTabs>

      <Workspace>
        <ViewLabel>[−][Top][2D Wireframe]</ViewLabel>

        <Place $l={477} $t={199}>
          <Icon w={326} h={202}>
            <path d="M.5.5h325v200H.5zM27.500 28.500h271v143h-271zM54.500 57.500h217v85h-217z" stroke="#d3d6d9" />
            <path d="M65 147.500h29M101 147.500h29M97.500 114v30M97.500 151v31" stroke="#e4e6e8" /><rect x="94.500" y="144.500" width="6" height="6" stroke="#f2f2f2" />
          </Icon>
        </Place>

        <ViewControls $r={7} $t={9}>
          <ToolButton $w={16} aria-label="Minimize view"><Icon w={11} h={12}><path d="M1 9h9" stroke="#eee" strokeWidth="3" /></Icon></ToolButton>
          <ToolButton $w={16} aria-label="Restore view"><Icon w={11} h={12}><path d="M1.500 4.500h6v5h-6z" stroke="#eee" strokeWidth="1.800" /><path d="M4 2h6v6" stroke="#eee" strokeWidth="1.500" /></Icon></ToolButton>
          <ToolButton $w={16} aria-label="Close view"><Icon w={11} h={12}><path d="M2 2.500l7 7M9 2.500l-7 7" stroke="#eee" strokeWidth="2" /></Icon></ToolButton>
        </ViewControls>

        <Place $r={10} $t={36}>
          <Icon w={96} h={100}>
            <circle cx="48" cy="48" r="37" stroke="#454b54" strokeWidth="9" />
            <rect x="31" y="30" width="34" height="36" fill="#a6a9ac" stroke="#b8babd" />
            <g fill="#b4b7ba" fontFamily="Liberation Sans, sans-serif" fontWeight="700" fontSize="14" textAnchor="middle">
              <text x="48" y="13">N</text><text x="48" y="95">S</text><text x="9" y="54">W</text><text x="87" y="54">E</text>
              <text x="48" y="52" fontSize="9" fill="#4a4d52">TOP</text>
            </g>
          </Icon>
        </Place>
        <Place $r={36} $t={149}><WcsButton>WCS</WcsButton></Place>

        <NavBar $r={3} $t={191}>
          <Icon w={29} h={208}>
            <g stroke="#3b4449">
              <circle cx="24" cy="5" r="3" /><circle cx="24" cy="203" r="3" />
              <path d="M11 19h14v14l-6 6H5V25z" /><circle cx="15" cy="29" r="7" /><rect x="11" y="25" width="8" height="8" rx="2" />
              <path d="M13 49h4M13 118h4M13 155h4" strokeWidth="2" />
              <path d="M10 80l-5-6c-2-3 1-4 3-2l3 3-2-9c0-3 2-3 3 0l2 5v-8c0-3 3-3 3 0v8l2-6c1-2 3-1 3 1l-1 8 1-3c2-2 3 0 2 2l-3 8c-1 3-9 3-11-1z" />
              <path d="M5 89l14 14M19 89L5 103" /><circle cx="5" cy="89" r="1.500" fill="#3b4449" /><circle cx="19" cy="89" r="1.500" fill="#3b4449" /><circle cx="5" cy="103" r="1.500" fill="#3b4449" /><circle cx="19" cy="102" r="5" /><path d="M22 106l4 4" strokeWidth="2" />
              <ellipse cx="15" cy="137" rx="10" ry="4" /><path d="M13 147v-18l2-2 2 2v18l-2 2z" /><path d="M10 134l-5 4 5 4" />
              <path d="M4 168h6v5H4zM12 168h6v5h-6zM20 168h5v5h-5zM4 177h14v11H4z" /><path d="M9 180l5 3-5 3z" fill="#3b4449" />
            </g>
          </Icon>
        </NavBar>

        <Place $l={8} $b={5}>
          <Icon w={74} h={76}>
            <path d="M5.500 16v49M5.500 66.500H53" stroke="#cdd0d3" strokeWidth="1.300" /><rect x="1.500" y="61.500" width="9" height="9" stroke="#e0e2e4" strokeWidth="1.300" />
            <path d="M7 1l6 6 6-6M13 7v7M57 53l12 12M69 53L57 65" stroke="#cdd0d3" strokeWidth="1.300" />
          </Icon>
        </Place>

        <History $l={277} $b={28}>
          <HistoryLine $dim>{'Select object to offset or [Exit/Undo] <Exit>:'}</HistoryLine>
          <HistoryLine>{'Specify point on side to offset or [Exit/Multiple/Undo] <Exit>:'}</HistoryLine>
          <HistoryLine>{'Select object to offset or [Exit/Undo] <Exit>:'}</HistoryLine>
        </History>

        <CommandBar>
          <CommandTools>
            <Icon w={5} h={18}><path d="M.5 0v18M2.500 0v18M4.500 0v18" stroke="#bbb" strokeDasharray="1 1" /></Icon>
            <Icon w={9} h={10}><path d="M1 1.500l7 7M8 1.500l-7 7" stroke="#ddd" strokeWidth="1.800" /></Icon>
            <Icon w={14} h={14}><path d="M1 4c0-3 4-4 6-1 0 1 0 2 0 2l6 6c1 2-1 3-2 2L5 7C3 8 1 6 1 4l3 1 1-2-2-1" fill="#d4d4d4" /></Icon>
          </CommandTools>
          <ToolButton $w={30} aria-label="Recent commands"><Icon w={24} h={14}><rect x="1" y="0" width="14" height="13" fill="#8f969c" /><path d="M3 3l4 3-4 3M8 10.500h5" stroke="#4a5158" strokeWidth="1.300" /><path d="M18 5h5l-2.500 3z" fill="#6a6f73" /></Icon></ToolButton>
          <CommandInput aria-label="Command line" placeholder="Type a command" />
          <Icon w={7} h={5}><path d="M0 4.500h7L3.500 0z" fill="#222" /></Icon>
        </CommandBar>

        <Place $r={249} $b={8}>
          <Icon w={38} h={76}>
            <path d="M10 1h10v4H10z" fill="#a2a6ac" /><circle cx="15" cy="19" r="10" stroke="#a2a6ac" strokeWidth="2" /><path d="M13.500 15v8c-4-1-4-7 0-8zM16.500 15v8c4-1 4-7 0-8z" fill="#a2a6ac" />
            <path d="M11 31L3 60M20 31l8 29" stroke="#a2a6ac" strokeWidth="2.500" /><path d="M3 59L0 73M28 58l3 13M29 51l2 14" stroke="#eceeee" strokeWidth="1.500" />
          </Icon>
        </Place>
        <Place $r={50} $b={30}><Wordmark>SOURCECAD</Wordmark></Place>
      </Workspace>

      <Footer>
        <LayoutTabs>
          <LayoutTab $w={53} $active>Model</LayoutTab>
          <LayoutTab $w={58}>Layout1</LayoutTab>
          <LayoutTab $w={59}>Layout2</LayoutTab>
          <LayoutTab $w={23} aria-label="New layout"><Icon w={8} h={8}><path d="M0 4h8M4 0v8" stroke="#ddd" strokeWidth="1.800" /></Icon></LayoutTab>
        </LayoutTabs>
        <StatusBar>
          <StatusGroup $wide><Status name="Model space" w={46}>MODEL</Status></StatusGroup>
          <StatusGroup $wide>
            <Status name="Grid"><Icon w={14} h={14}><path d="M2.500 0v14M5.500 0v14M8.500 0v14M11.500 0v14M0 2.500h14M0 5.500h14M0 8.500h14M0 11.500h14" stroke="#b4b4b4" strokeWidth=".8" /></Icon></Status>
            <Status name="Snap"><Icon w={14} h={14}><path d="M0 .5h14M0 3.500h14M0 6.500h14M0 9.500h14M0 12.500h14" stroke="#d4d4d4" strokeDasharray="1 2" /></Icon></Status>
            <Drop name="Snap settings" />
          </StatusGroup>
          <StatusGroup><Status name="Dynamic input" w={23}><Icon><path d="M0 5.500h7M3.500 2v7" stroke="#ddd" /><path d="M7 9h9v4H7z" fill="#ddd" /></Icon></Status></StatusGroup>
          <StatusGroup>
            <Status name="Ortho"><Icon w={14} h={14}><path d="M1.500 0v12.500H14M1.500 8.500h4v4" stroke="#d4d4d4" strokeWidth="1.200" /></Icon></Status>
            <Status name="Polar tracking"><Icon><circle cx="7.500" cy="8" r="6" stroke="#3c8cf0" strokeWidth="1.700" /><path d="M7.500 8l6-5M7.500 8.500H16" stroke="#3c8cf0" strokeWidth="1.400" /></Icon></Status>
            <Drop name="Polar settings" />
            <Status name="Isometric drafting"><Icon><path d="M2 1l13 14M8.500 0v16M0 0l8 8" stroke="#bdbdbd" strokeWidth="1.200" /></Icon></Status>
            <Drop w={14} name="Isometric settings" />
          </StatusGroup>
          <StatusGroup>
            <Status name="Object snap tracking" w={23}><Icon><path d="M15 3L1 14.500h15" stroke="#3c8cf0" strokeWidth="1.400" /><circle cx="7" cy="9" r="2" fill="#3c8cf0" /></Icon></Status>
            <Status name="Object snap" w={23}><Icon><rect x="2.500" y="3.500" width="12" height="11" stroke="#3c8cf0" strokeWidth="1.700" /><rect x="0" y="1" width="5" height="5" fill="#1d9b3a" /></Icon></Status>
            <Drop w={13} name="Object snap settings" />
          </StatusGroup>
          <StatusGroup><Status name="Lineweight" w={23}><Icon><path d="M0 2.500h16" stroke="#ddd" /><path d="M0 6h10M0 9.500h16" stroke="#ddd" strokeWidth="2" /><path d="M0 13.500h9" stroke="#ddd" strokeWidth="3" /></Icon></Status></StatusGroup>
          <StatusGroup><Status name="Transparency"><Icon w={14} h={14}><rect width="14" height="14" fill="#6aa8f4" /><path d="M0 2L2 0M0 6l6-6M0 10L10 0M0 14L14 0M4 14L14 4M8 14l6-6M12 14l2-2M2 0l12 12M0 2l12 12M6 0l8 8M0 6l8 8M10 0l4 4M0 10l4 4" stroke="#1d5cae" strokeWidth=".9" /></Icon></Status></StatusGroup>
          <StatusGroup><Status name="Selection cycling" w={23}><Icon><path d="M1 3h6M4 0v6M4 6h6" stroke="#4d98f2" strokeWidth="1.500" /><path d="M7 8h8v7H7z" fill="#93d59a" stroke="#4a8c50" strokeWidth=".6" /></Icon></Status></StatusGroup>
          <StatusGroup $wide><Status name="Dynamic UCS" w={24}><Icon><path d="M1.500 1v13.500H16M2 14L13 4" stroke="#ccc" strokeWidth="1.200" /><path d="M9 4l4-3 3 4-5 5z" fill="#ccc" /></Icon></Status></StatusGroup>
          <StatusGroup $wide>
            <Status name="Annotation visibility"><Icon><path d="M7 1l2 9 6 5-7-3-7 3 5-5z" fill="#3c8cf0" stroke="#3c8cf0" /><circle cx="11.500" cy="4" r="3" stroke="#3c8cf0" strokeWidth="1.500" /></Icon></Status>
            <Status name="Auto scale" w={23}><Icon><path d="M7 1l2 9 6 5-7-3-7 3 5-5z" fill="#c8c8c8" stroke="#c8c8c8" /><path d="M13 0l-4 5h3l-2 4 5-5h-3z" fill="#e4e4e4" /></Icon></Status>
            <Status name="Annotation scale icon"><Icon><path d="M8 1l1.500 9 5.500 5-7-3-7 3 5.500-5z" fill="#c8c8c8" stroke="#c8c8c8" /></Icon></Status>
            <Status name="Annotation scale" w={22}>1:1</Status>
            <Drop w={10} name="Scale list" />
          </StatusGroup>
          <StatusGroup>
            <Status name="Workspace"><Icon><circle cx="8" cy="8" r="3.500" stroke="#c8c8c8" strokeWidth="2.500" /><circle cx="8" cy="8" r="5.500" stroke="#c8c8c8" strokeWidth="2" strokeDasharray="2.200 2.120" /></Icon></Status>
            <Drop name="Workspace list" />
          </StatusGroup>
          <StatusGroup><Status name="Annotation monitor" w={23}><Icon w={14} h={14}><path d="M0 7h14M7 0v14" stroke="#ddd" strokeWidth="1.500" /></Icon></Status></StatusGroup>
          <StatusGroup $wide><Status name="Isolate objects" w={23}><Icon><path d="M1 2h6v5H1zM5 15l3-6 3 6z" stroke="#ccc" strokeWidth="1.200" /><circle cx="12" cy="7" r="2.500" stroke="#ccc" strokeWidth="1.200" /></Icon></Status></StatusGroup>
          <StatusGroup><Status name="Graphics performance" w={26}><Icon><circle cx="8" cy="8" r="8" fill="#1568b4" /><path d="M4 8l3 3 5-6" stroke="#8fc4f6" strokeWidth="1.500" /></Icon></Status></StatusGroup>
          <Status name="Clean screen" w={24}><Icon><rect x="1" y="2" width="14" height="12" stroke="#ccc" strokeWidth="1.300" /><path d="M3.500 12l3-3M12.500 4l-3 3M3.500 9v3h3M9.500 4h3v3" stroke="#ddd" /></Icon></Status>
          <Status name="Customization"><Icon w={14} h={14}><path d="M0 2h14M0 7h14M0 12h14" stroke="#ccc" strokeWidth="2" /></Icon></Status>
        </StatusBar>
        <Watermark>udemy</Watermark>
      </Footer>
    </Page>
  );
}
